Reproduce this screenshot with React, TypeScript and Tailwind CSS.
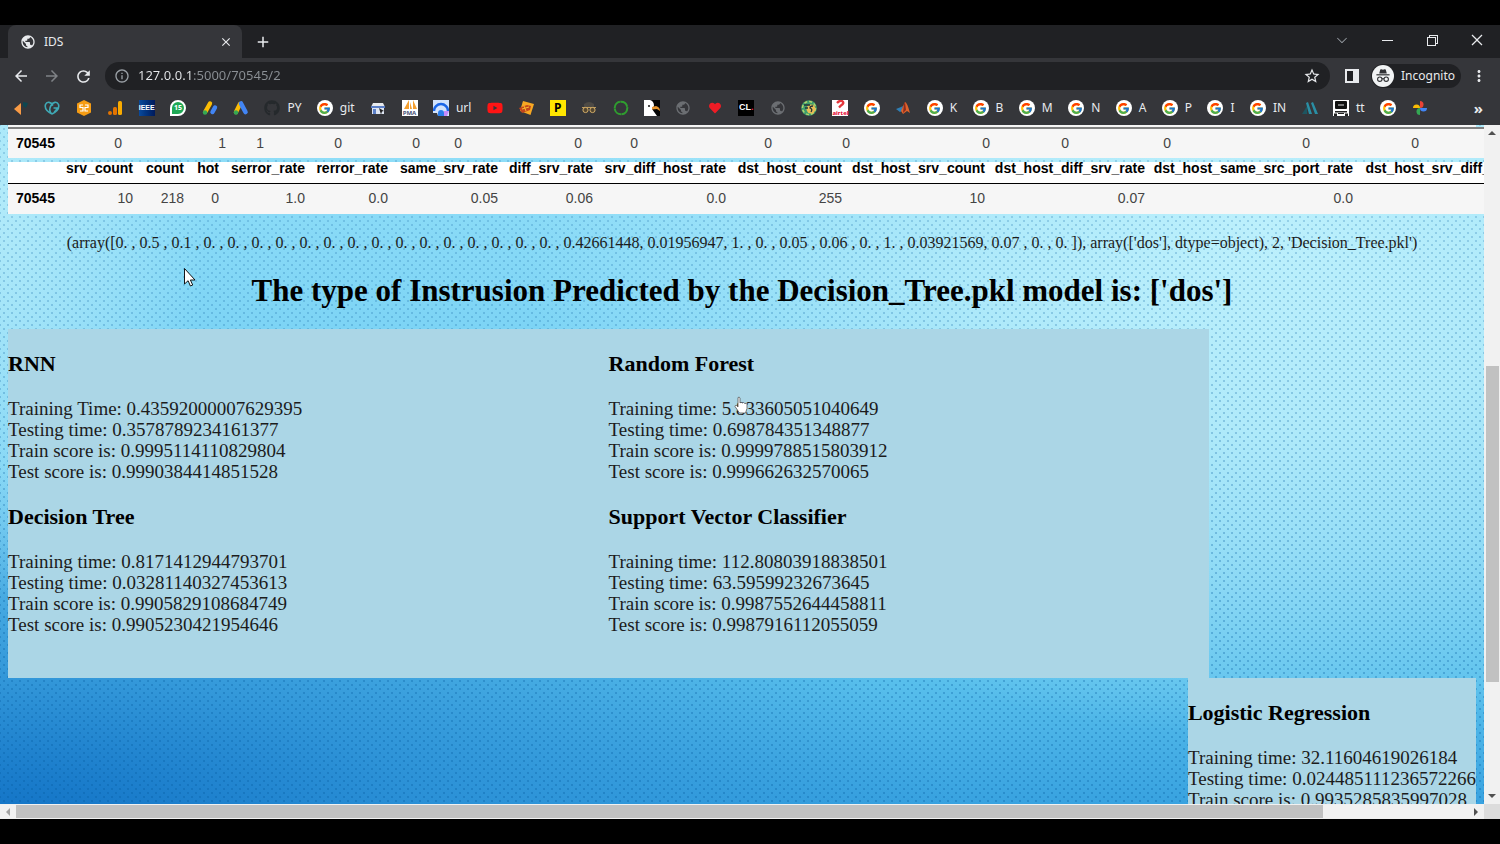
import type { ReactNode } from 'react';
import {
  MdArrowBack,
  MdArrowForward,
  MdRefresh,
  MdInfoOutline,
  MdStarBorder,
  MdMoreVert,
  MdClose,
  MdAdd,
  MdPublic,
} from 'react-icons/md';
import { FaGithub, FaHeart, FaYoutube } from 'react-icons/fa';
import { FcGoogle } from 'react-icons/fc';
import {
  VscChevronDown,
  VscChromeClose,
  VscChromeMinimize,
  VscChromeRestore,
} from 'react-icons/vsc';

interface Bookmark {
  name: string;
  icon: ReactNode;
  label?: string;
}

interface ModelStats {
  name: string;
  lines: string[];
}

function Svg({ children }: { children: ReactNode }) {
  return (
    <svg viewBox="0 0 16 16" className="size-4 shrink-0" aria-hidden="true">
      {children}
    </svg>
  );
}

function GoogleIcon() {
  return (
    <span className="flex size-4 items-center justify-center rounded-full bg-white">
      <FcGoogle className="size-[13px]" />
    </span>
  );
}

function IncognitoIcon() {
  return (
    <svg viewBox="0 0 22 22" className="size-[22px]" aria-hidden="true">
      <circle cx="11" cy="11" r="11" fill="#f1f3f4" />
      <path d="M7.2 8.6 8.2 4.8q.3-.8 1.1-.5l1.7.5 1.7-.5q.8-.3 1.1.5l1 3.8z" fill="#303134" />
      <path d="M4.4 9.2h13.2v1.2H4.4z" fill="#303134" />
      <circle cx="7.8" cy="14.2" r="2.2" fill="none" stroke="#303134" strokeWidth="1.1" />
      <circle cx="14.2" cy="14.2" r="2.2" fill="none" stroke="#303134" strokeWidth="1.1" />
      <path d="M10 14q1-.8 2 0" fill="none" stroke="#303134" strokeWidth="1.1" />
    </svg>
  );
}

const bookmarks: Bookmark[] = [
  {
    name: 'Kite',
    icon: (
      <Svg>
        <path d="M1 9 8 3v12z" fill="#f99b45" />
        <path d="m10 2 5 1-2 5-3-2z" fill="#0d4650" />
      </Svg>
    ),
  },
  {
    name: 'GoDaddy',
    icon: (
      <Svg>
        <path
          d="M8 14C3 11.500.5 8 1.500 4.500 3 1 7 2 9 5.500M8 14c5-2.500 7.500-6 6.500-9.500C13 1 9 2 7 5.500S5.500 12 8 14M9.500 8h3.500q-.5 3-3 4"
          fill="none"
          stroke="#3fa9b5"
          strokeWidth="1.600"
        />
      </Svg>
    ),
  },
  {
    name: 'SageMaker',
    icon: (
      <Svg>
        <path d="m8 0 7 3.500v9L8 16l-7-3.500v-9z" fill="#f59c14" />
        <path d="M7 5H4v2.500h3V11H4m5-6h3v2.500H9V11h3" fill="none" stroke="#fff" strokeWidth="1.200" />
      </Svg>
    ),
  },
  {
    name: 'Analytics',
    icon: (
      <Svg>
        <circle cx="3" cy="13" r="2" fill="#e37400" />
        <rect x="6" y="7" width="4" height="8" rx="1.500" fill="#e37400" />
        <rect x="11" y="1" width="4" height="14" rx="1.500" fill="#f9ab00" />
      </Svg>
    ),
  },
  {
    name: 'IEEE',
    icon: (
      <span className="flex size-4 items-center justify-center bg-gradient-to-r from-[#0a4a9c] to-[#001a5c] font-['Liberation_Sans',sans-serif] text-[7px] font-bold text-white">
        IEEE
      </span>
    ),
  },
  {
    name: 'WhatsApp',
    icon: (
      <span className="flex size-4 items-center justify-center rounded-full rounded-bl-none border-2 border-white bg-[#1fa855] text-[7px] font-bold text-white">
        15
      </span>
    ),
  },
  {
    name: 'AdSense',
    icon: (
      <Svg>
        <path d="M8 3.500 3.500 11.500" stroke="#fbbc04" strokeWidth="4.400" strokeLinecap="round" />
        <circle cx="3" cy="12.500" r="2.200" fill="#34a853" />
        <path d="m13 7.500-2.500 4.500" stroke="#4285f4" strokeWidth="4.400" strokeLinecap="round" />
      </Svg>
    ),
  },
  {
    name: 'Ads',
    icon: (
      <Svg>
        <path d="M7 4 3 12" stroke="#fbbc04" strokeWidth="4.400" strokeLinecap="round" />
        <path d="m8 3.500 4.500 8.500" stroke="#4285f4" strokeWidth="4.600" strokeLinecap="round" />
        <circle cx="3" cy="12.500" r="2.200" fill="#34a853" />
      </Svg>
    ),
  },
  { name: 'PY', icon: <FaGithub className="size-4 text-[#25292c]" />, label: 'PY' },
  { name: 'git', icon: <GoogleIcon />, label: 'git' },
  {
    name: 'Store',
    icon: (
      <Svg>
        <path d="M3 3h10l2 4H1z" fill="#e8eaed" />
        <path d="M2 7h12v7H2z" fill="#dfe6f2" />
        <path d="M1 6h14v2H1zM3 9h3v5H3z" fill="#5b7fc7" />
        <path d="m9 8 5 3-2 .5-1 3z" fill="#222" />
      </Svg>
    ),
  },
  {
    name: 'phpMyAdmin',
    icon: (
      <span className="relative flex size-4 items-end justify-center bg-white text-[6px] leading-[6px] font-bold text-[#4b5577]">
        <svg viewBox="0 0 16 10" className="absolute inset-x-0 top-0 h-[10px] w-4" aria-hidden="true">
          <path d="M7 0v9H2zM8 2l2 7H8zM11 0l4 9h-4z" fill="#f5a030" />
        </svg>
        PMA
      </span>
    ),
  },
  {
    name: 'url',
    icon: (
      <Svg>
        <rect width="16" height="16" fill="#d2e3fc" />
        <path d="M1 11a7 7 0 0 1 14 0" fill="none" stroke="#1a66e8" strokeWidth="2.500" />
        <path d="M5 13a3 3 0 0 1 6 0v3H5z" fill="#2b7de9" />
        <path d="M11 11h5l-2 5h-3z" fill="#c58af9" />
        <path d="M0 13h4l1 3H0z" fill="#35363a" />
      </Svg>
    ),
    label: 'url',
  },
  { name: 'YouTube', icon: <FaYoutube className="size-4 text-[#ff1414]" /> },
  {
    name: 'Tickets',
    icon: (
      <Svg>
        <path d="m5 1 11 3-3.500 11L2 11z" fill="#f7a823" />
        <path d="m1 8 8-3 4 1-1 4-8 3z" fill="#c4451c" />
        <path d="m4 9 7-2M6 6l2 5" stroke="#f9bd2b" />
      </Svg>
    ),
  },
  {
    name: 'P',
    icon: (
      <span className="flex size-4 items-center justify-center bg-[#ffe600] text-[12px] font-bold text-black">
        P
      </span>
    ),
  },
  {
    name: 'Glasses',
    icon: (
      <Svg>
        <path d="M3 4q5-4 10 0v3H3z" fill="#4d4a45" />
        <path d="M1 7.500h14" stroke="#bd9a5c" />
        <circle cx="4.500" cy="10" r="2.600" fill="#534630" stroke="#d3ad68" />
        <circle cx="11.500" cy="10" r="2.600" fill="#534630" stroke="#d3ad68" />
      </Svg>
    ),
  },
  {
    name: 'Ring',
    icon: (
      <Svg>
        <circle cx="8" cy="8" r="6.300" fill="none" stroke="#2f9e2f" strokeWidth="2" strokeDasharray="9 .4" />
      </Svg>
    ),
  },
  {
    name: 'Eagle',
    icon: (
      <Svg>
        <rect width="16" height="16" fill="#050505" />
        <path d="M0 0h6q4 1 4 6l-2 3 5 7H0z" fill="#fff" />
        <path d="m8 7 4-1q4 1 4 5l-3-2-5 .5z" fill="#e8962e" />
        <circle cx="5" cy="6" r="1" fill="#111" />
      </Svg>
    ),
  },
  { name: 'Site', icon: <MdPublic className="size-4 text-[#6b6e72]" /> },
  { name: 'Heart', icon: <FaHeart className="mx-[2px] size-3 text-[#ee1c25]" /> },
  {
    name: 'CL',
    icon: (
      <span className="flex size-4 items-center justify-center bg-black font-['Liberation_Sans',sans-serif] text-[9px] font-bold text-white">
        CL<span className="text-[#e0224e]">.</span>
      </span>
    ),
  },
  { name: 'Page', icon: <MdPublic className="size-4 text-[#6b6e72]" /> },
  {
    name: 'Crest',
    icon: (
      <Svg>
        <circle cx="8" cy="8" r="7.800" fill="#3c9d6c" />
        <circle cx="8" cy="8" r="6.500" fill="none" stroke="#b4d36b" strokeWidth="1.500" strokeDasharray="3 2" />
        <circle cx="10" cy="9" r="4.500" fill="#e9bd55" />
        <path d="M3 5h6M4 8h3M12 6q-3 0-3 2 3 1 1 4" fill="none" stroke="#24343a" strokeWidth="1.300" />
      </Svg>
    ),
  },
  {
    name: 'Airtel',
    icon: (
      <span className="relative flex size-4 items-end justify-center bg-white text-[6px] leading-[6px] font-bold text-[#e4002b]">
        <svg viewBox="0 0 16 10" className="absolute inset-x-0 top-0 h-[10px] w-4" aria-hidden="true">
          <path d="M5 3q3-3 5-2 3 2-1 4.500l-2 2" fill="none" stroke="#e4383d" strokeWidth="2.400" />
        </svg>
        airtel
      </span>
    ),
  },
  { name: 'Google', icon: <GoogleIcon /> },
  {
    name: 'MATLAB',
    icon: (
      <Svg>
        <path d="m1 9 5-2 2-1-1 5-2 1z" fill="#2f7fb5" />
        <path d="m6 11 3-7 1-2q2 0 5 11l-3-2-4 3z" fill="#e0622a" />
        <path d="m9 4 1-2 1 8-3 3z" fill="#8a2c20" />
      </Svg>
    ),
  },
  { name: 'K', icon: <GoogleIcon />, label: 'K' },
  { name: 'B', icon: <GoogleIcon />, label: 'B' },
  { name: 'M', icon: <GoogleIcon />, label: 'M' },
  { name: 'N', icon: <GoogleIcon />, label: 'N' },
  { name: 'A', icon: <GoogleIcon />, label: 'A' },
  { name: 'P docs', icon: <GoogleIcon />, label: 'P' },
  { name: 'I', icon: <GoogleIcon />, label: 'I' },
  { name: 'IN', icon: <GoogleIcon />, label: 'IN' },
  {
    name: 'Peaks',
    icon: (
      <Svg>
        <path d="M0 14 5 6v8z" fill="#1d5560" />
        <path d="m4 3 2-1 4 12H7zM9 3l2-1 5 12h-3z" fill="#2a8fa5" />
      </Svg>
    ),
  },
  {
    name: 'tt',
    icon: (
      <Svg>
        <rect width="16" height="16" fill="#fff" />
        <rect x="2" y="1" width="12" height="8" rx="1" fill="#111" />
        <path d="M5 4h6v2H5z" fill="#777" />
        <path d="M2 11h12v1.500H2zM1 13.500h3V16H1zM12 13.500h3V16h-3zM5 13h6v1H5z" fill="#222" />
      </Svg>
    ),
    label: 'tt',
  },
  { name: 'Search', icon: <GoogleIcon /> },
  {
    name: 'Photos',
    icon: (
      <Svg>
        <path d="M8 8V1a3.500 3.500 0 0 1 0 7" fill="#ea4335" />
        <path d="M8 8h7a3.500 3.500 0 0 1-7 0" fill="#4285f4" />
        <path d="M8 8v7a3.500 3.500 0 0 1 0-7" fill="#34a853" />
        <path d="M8 8H1a3.500 3.500 0 0 1 7 0" fill="#fbbc04" />
      </Svg>
    ),
  },
];

const flagRow = ['0', '1', '1', '0', '0', '0', '0', '0', '0', '0', '0', '0', '0', '0', '0', ''];

const flagCols = [
  'w-[53px]', 'w-[68px]', 'w-[104px]', 'w-[38px]', 'w-[78px]', 'w-[78px]', 'w-[42px]', 'w-[120px]', 'w-[56px]',
  'w-[134px]', 'w-[78px]', 'w-[140px]', 'w-[79px]', 'w-[102px]', 'w-[139px]', 'w-[109px]', 'w-[140px]',
];

const rateColumns = [
  { name: 'srv_count', value: '10', width: 'w-[79px]' },
  { name: 'count', value: '218', width: 'w-[51px]' },
  { name: 'hot', value: '0', width: 'w-[35px]' },
  { name: 'serror_rate', value: '1.0', width: 'w-[86px]' },
  { name: 'rerror_rate', value: '0.0', width: 'w-[83px]' },
  { name: 'same_srv_rate', value: '0.05', width: 'w-[110px]' },
  { name: 'diff_srv_rate', value: '0.06', width: 'w-[95px]' },
  { name: 'srv_diff_host_rate', value: '0.0', width: 'w-[133px]' },
  { name: 'dst_host_count', value: '255', width: 'w-[116px]' },
  { name: 'dst_host_srv_count', value: '10', width: 'w-[143px]' },
  { name: 'dst_host_diff_srv_rate', value: '0.07', width: 'w-[160px]' },
  { name: 'dst_host_same_src_port_rate', value: '0.0', width: 'w-[208px]' },
  { name: 'dst_host_srv_diff_host_rate', value: '', width: 'w-[200px]' },
];

const models: ModelStats[] = [
  {
    name: 'RNN',
    lines: [
      'Training Time: 0.43592000007629395',
      'Testing time: 0.3578789234161377',
      'Train score is: 0.9995114110829804',
      'Test score is: 0.9990384414851528',
    ],
  },
  {
    name: 'Random Forest',
    lines: [
      'Training time: 5.833605051040649',
      'Testing time: 0.698784351348877',
      'Train score is: 0.9999788515803912',
      'Test score is: 0.999662632570065',
    ],
  },
  {
    name: 'Decision Tree',
    lines: [
      'Training time: 0.8171412944793701',
      'Testing time: 0.03281140327453613',
      'Train score is: 0.9905829108684749',
      'Test score is: 0.9905230421954646',
    ],
  },
  {
    name: 'Support Vector Classifier',
    lines: [
      'Training time: 112.80803918838501',
      'Testing time: 63.59599232673645',
      'Train score is: 0.9987552644458811',
      'Test score is: 0.9987916112055059',
    ],
  },
];

const logistic: ModelStats = {
  name: 'Logistic Regression',
  lines: [
    'Training time: 32.11604619026184',
    'Testing time: 0.024485111236572266',
    'Train score is: 0.9935285835997028',
  ],
};

function TabStrip() {
  return (
    <div className="flex h-[33px] items-stretch bg-[#202124] pl-2 text-[#e8eaed]">
      <div className="flex w-[234px] items-center rounded-t-lg bg-[#35363a] px-3">
        <MdPublic className="size-4" />
        <span className="ml-2 flex-1 text-[12px]">IDS</span>
        <button aria-label="Close tab" className="-mr-1 p-px">
          <MdClose className="size-[14px]" />
        </button>
      </div>
      <button aria-label="New tab" className="ml-3 w-[18px]">
        <MdAdd className="size-[18px]" />
      </button>
      <div className="ml-auto flex items-center gap-[29px] pr-[15px] pb-1">
        <button aria-label="Search tabs" className="text-[#9aa0a6]">
          <VscChevronDown className="size-4" />
        </button>
        <button aria-label="Minimize">
          <VscChromeMinimize className="size-4" />
        </button>
        <button aria-label="Restore">
          <VscChromeRestore className="size-4" />
        </button>
        <button aria-label="Close">
          <VscChromeClose className="size-4" />
        </button>
      </div>
    </div>
  );
}

function Toolbar() {
  return (
    <div className="flex h-9 items-center bg-[#35363a] pr-3 pl-3 text-[#e8eaed]">
      <div className="flex gap-[13px]">
        <button aria-label="Back">
          <MdArrowBack className="size-[18px]" />
        </button>
        <button aria-label="Forward" className="text-[#7f8286]">
          <MdArrowForward className="size-[18px]" />
        </button>
        <button aria-label="Reload">
          <MdRefresh className="size-[19px]" />
        </button>
      </div>
      <div className="ml-3 flex h-7 flex-1 items-center rounded-full bg-[#202124] px-[9px]">
        <MdInfoOutline className="size-4 text-[#9aa0a6]" />
        <input
          aria-label="Address"
          defaultValue="127.0.0.1:5000/70545/2"
          className="ml-2 min-w-0 flex-1 bg-[linear-gradient(to_right,#e8eaed_55px,#8b9095_55px)] bg-clip-text text-[13px] text-transparent outline-none"
        />
        <button aria-label="Bookmark this page">
          <MdStarBorder className="size-[18px]" />
        </button>
      </div>
      <button aria-label="Side panel" className="ml-[14px]">
        <svg viewBox="0 0 16 16" className="size-4" aria-hidden="true">
          <path d="M1 1h14v14H1z" fill="#e8eaed" />
          <path d="M3 3h6v10H3z" fill="#202124" />
        </svg>
      </button>
      <button className="ml-[11px] flex h-6 items-center gap-[7px] rounded-full bg-[#202124] pr-[6px] pl-px text-[12px]">
        <IncognitoIcon />
        Incognito
      </button>
      <button aria-label="Menu" className="ml-[9px]">
        <MdMoreVert className="size-[18px]" />
      </button>
    </div>
  );
}

function BookmarksBar() {
  return (
    <nav className="flex h-[31px] items-center bg-[#35363a] pr-[17px] pb-[3px] pl-[13px] text-[12px] text-[#e8eaed]">
      <div className="flex flex-1 items-center justify-between">
        {bookmarks.map((b) => (
          <a key={b.name} href="#" aria-label={b.name} className="flex shrink-0 items-center gap-[7px]">
            {b.icon}
            {b.label}
          </a>
        ))}
      </div>
      <button aria-label="More bookmarks" className="ml-[46px] text-[15px] font-bold">
        »
      </button>
    </nav>
  );
}

function Stats({ name, lines }: ModelStats) {
  return (
    <section>
      <h3 className="mt-[22px] mb-[22px] text-[22px] leading-[25px] font-bold">{name}</h3>
      <div className="text-[19px] leading-[21px] whitespace-nowrap text-[#1c1c1c]">
        {lines.map((line) => (
          <p key={line}>{line}</p>
        ))}
      </div>
    </section>
  );
}

function FeatureTables() {
  return (
    <div className="flex flex-col gap-1 border-t-2 border-[#f6f6f6] font-['Liberation_Sans',Arial,sans-serif] text-[14px]">
      <table className="w-px table-fixed border-collapse border-t-2 border-[#808080] bg-[#f6f6f6] text-right text-[#444]">
        <colgroup>
          {flagCols.map((width, i) => (
            <col key={i} className={width} />
          ))}
        </colgroup>
        <tbody>
          <tr className="h-[30px]">
            <th className="pl-2 text-left text-black">70545</th>
            {flagRow.map((value, i) => (
              <td key={i} className="pr-[7px]">
                {value}
              </td>
            ))}
          </tr>
        </tbody>
      </table>
      <table className="w-px table-fixed border-collapse bg-white text-right whitespace-nowrap text-[#444]">
        <colgroup>
          <col className="w-[53px]" />
          {rateColumns.map((c) => (
            <col key={c.name} className={c.width} />
          ))}
        </colgroup>
        <thead>
          <tr className="h-[21px] border-b border-black text-black">
            <td />
            {rateColumns.map((c) => (
              <th key={c.name} className="pr-[7px] pb-2 leading-[13px]">
                {c.name}
              </th>
            ))}
          </tr>
        </thead>
        <tbody>
          <tr className="h-[30px] bg-[#f6f6f6]">
            <th className="pl-2 text-left text-black">70545</th>
            {rateColumns.map((c) => (
              <td key={c.name} className="pr-[7px]">
                {c.value}
              </td>
            ))}
          </tr>
        </tbody>
      </table>
    </div>
  );
}

function Pointers() {
  return (
    <>
      <svg viewBox="0 0 12 19" className="absolute top-[143px] left-[184px] h-[19px] w-3" aria-hidden="true">
        <path d="M.5.500v15.500l3.600-3.300 2.300 5.300 2.300-1-2.300-5h4.600z" fill="#fff" stroke="#000" strokeWidth=".9" />
      </svg>
      <svg viewBox="0 0 14 18" className="absolute top-[271px] left-[734px] h-[18px] w-[14px]" aria-hidden="true">
        <path
          d="M4 1.500q1.500-1 2 .5v5l1-.8 1.500.8 1-.5 1.300 1 1.200-.2 1 1.200v4L11.500 17H5.500L1 10.500q0-1.500 1.500-1L4 11z"
          fill="#fff"
          stroke="#555"
          strokeWidth=".8"
        />
      </svg>
    </>
  );
}

function IdsPage() {
  return (
    <main className="relative min-w-0 flex-1 overflow-hidden font-['Liberation_Serif','Times_New_Roman',serif] text-black [background:linear-gradient(to_bottom,#a8e8fa59,transparent_70%),radial-gradient(circle,#00569a48_1px,transparent_1.5px)_0_0/8px_8px,radial-gradient(circle,#00569a48_1px,transparent_1.5px)_4px_4px/8px_8px,radial-gradient(ellipse_50%_75%_at_85%_15%,#c4f3fd,#b0eafa_40%,transparent),radial-gradient(ellipse_14%_60%_at_0%_10%,#b6ecfa,transparent),radial-gradient(ellipse_65%_55%_at_0%_105%,#1070c4,#2488d2b0_45%,transparent),linear-gradient(to_bottom,#86daf7,#72cff4_30%,#6ccbf2_60%,#58bfec_82%,#38a2e0)]">
      <div className="px-2">
        <FeatureTables />
        <p className="mt-5 text-center text-[16px] leading-[18px] whitespace-nowrap text-[#1c1c1c]">
          (array([0. , 0.5 , 0.1 , 0. , 0. , 0. , 0. , 0. , 0. , 0. , 0. , 0. , 0. , 0. , 0. , 0. , 0. , 0. , 0.42661448,
          0.01956947, 1. , 0. , 0.05 , 0.06 , 0. , 1. , 0.03921569, 0.07 , 0. , 0. ]), array(['dos'], dtype=object), 2,
          'Decision_Tree.pkl')
        </p>
        <h1 className="mt-[21px] mb-5 text-center text-[31px] leading-9 font-bold whitespace-nowrap">
          The type of Instrusion Predicted by the Decision_Tree.pkl model is: ['dos']
        </h1>
        <div className="grid w-9/11 grid-cols-2 bg-[#abd6e6] pb-[43px]">
          {models.map((m) => (
            <Stats key={m.name} {...m} />
          ))}
        </div>
        <div className="flex justify-end">
          <div className="flow-root w-fit bg-[#abd6e6]">
            <Stats {...logistic} />
          </div>
        </div>
      </div>
      <Pointers />
    </main>
  );
}

function VerticalScrollbar() {
  return (
    <div className="flex w-4 flex-col items-center bg-[#f1f1f1] py-[6px]" aria-hidden="true">
      <div className="border-x-4 border-b-4 border-x-transparent border-b-[#505050]" />
      <div className="flex w-[13px] flex-1 flex-col">
        <div className="basis-[35%]" />
        <div className="basis-[48%] bg-[#c1c1c1]" />
      </div>
      <div className="border-x-4 border-t-4 border-x-transparent border-t-[#505050]" />
    </div>
  );
}

function HorizontalScrollbar() {
  return (
    <div className="flex h-[15px] bg-[#dcdcdc]" aria-hidden="true">
      <div className="flex flex-1 items-center gap-[6px] bg-[#f1f1f1] px-[6px]">
        <div className="border-y-4 border-r-4 border-y-transparent border-r-[#a3a3a3]" />
        <div className="flex h-[13px] flex-1">
          <div className="basis-9/10 bg-[#c1c1c1]" />
        </div>
        <div className="border-y-4 border-l-4 border-y-transparent border-l-[#505050]" />
      </div>
      <div className="w-4" />
    </div>
  );
}

export default function App() {
  return (
    <div className="flex h-screen flex-col overflow-hidden bg-black py-[25px] font-['Noto_Sans','Segoe_UI',sans-serif]">
      <header>
        <TabStrip />
        <Toolbar />
        <BookmarksBar />
      </header>
      <div className="flex min-h-0 flex-1">
        <IdsPage />
        <VerticalScrollbar />
      </div>
      <HorizontalScrollbar />
    </div>
  );
}
